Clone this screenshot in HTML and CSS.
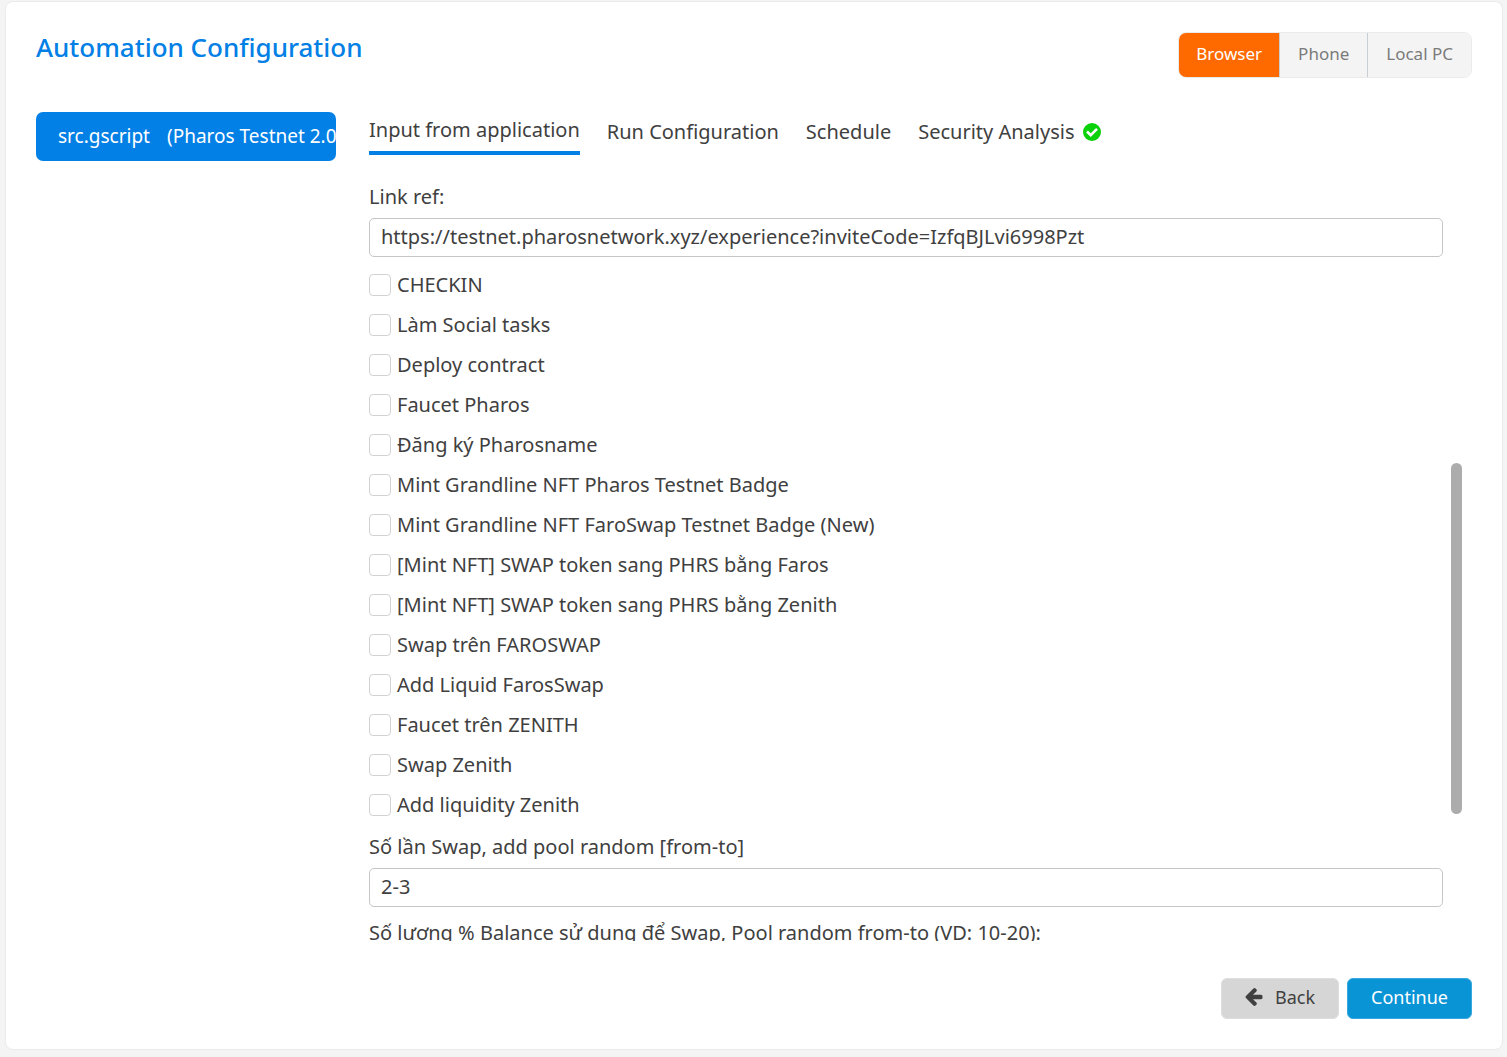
FILE: index.html
```html
<!DOCTYPE html>
<html lang="vi">
<head>
<meta charset="utf-8">
<meta name="viewport" content="width=device-width, initial-scale=1">
<title>Automation Configuration</title>
<link rel="stylesheet" href="styles.css">
</head>
<body>
<main class="card">
  <header class="card-header">
    <h1 class="title">Automation Configuration</h1>
    <div class="segmented" role="group" aria-label="Target device">
      <button type="button" class="segment segment-active">Browser</button>
      <button type="button" class="segment">Phone</button>
      <button type="button" class="segment">Local PC</button>
    </div>
  </header>

  <div class="workspace">
    <aside class="scripts">
      <button type="button" class="script"><span>src.gscript</span><span>(Pharos Testnet 2.0)</span></button>
    </aside>

    <section class="config">
      <nav class="tabs">
        <a href="#input" class="tab tab-active">Input from application</a>
        <a href="#run" class="tab">Run Configuration</a>
        <a href="#schedule" class="tab">Schedule</a>
        <a href="#security" class="tab">Security Analysis
          <svg class="verified" viewBox="0 0 18 18" aria-hidden="true"><circle cx="9" cy="9" r="9" fill="#0bd10b"/><path d="M4 8.500l3.700 3.700 6.300-6.300" fill="none" stroke="#fff" stroke-width="2.600"/></svg>
        </a>
      </nav>

      <div class="scroller">
        <form class="fields">
          <div class="field">
            <label for="link-ref">Link ref:</label>
            <input id="link-ref" class="text-input" type="text" value="https://testnet.pharosnetwork.xyz/experience?inviteCode=IzfqBJLvi6998Pzt">
          </div>
          <div class="checks">
            <label class="check"><input type="checkbox"><span>CHECKIN</span></label>
            <label class="check"><input type="checkbox"><span>Làm Social tasks</span></label>
            <label class="check"><input type="checkbox"><span>Deploy contract</span></label>
            <label class="check"><input type="checkbox"><span>Faucet Pharos</span></label>
            <label class="check"><input type="checkbox"><span>Đăng ký Pharosname</span></label>
            <label class="check"><input type="checkbox"><span>Mint Grandline NFT Pharos Testnet Badge</span></label>
            <label class="check"><input type="checkbox"><span>Mint Grandline NFT FaroSwap Testnet Badge (New)</span></label>
            <label class="check"><input type="checkbox"><span>[Mint NFT] SWAP token sang PHRS bằng Faros</span></label>
            <label class="check"><input type="checkbox"><span>[Mint NFT] SWAP token sang PHRS bằng Zenith</span></label>
            <label class="check"><input type="checkbox"><span>Swap trên FAROSWAP</span></label>
            <label class="check"><input type="checkbox"><span>Add Liquid FarosSwap</span></label>
            <label class="check"><input type="checkbox"><span>Faucet trên ZENITH</span></label>
            <label class="check"><input type="checkbox"><span>Swap Zenith</span></label>
            <label class="check"><input type="checkbox"><span>Add liquidity Zenith</span></label>
          </div>
          <div class="field">
            <label for="swap-count">Số lần Swap, add pool random [from-to]</label>
            <input id="swap-count" class="text-input" type="text" value="2-3">
          </div>
          <div class="field">
            <label for="balance">Số lượng % Balance sử dụng để Swap, Pool random from-to (VD: 10-20):</label>
            <input id="balance" class="text-input" type="text">
          </div>
        </form>
        <div class="track" aria-hidden="true"><div class="thumb"></div></div>
      </div>
    </section>
  </div>

  <footer class="actions">
    <button type="button" class="button button-back">
      <svg class="arrow" viewBox="148 180 1560 1560" aria-hidden="true"><path fill="#404040" d="M1664 896v128q0 53-32.500 90.500t-84.500 37.500h-704l293 294q38 36 38 90t-38 90l-75 76q-37 37-90 37-52 0-91-37l-651-652q-37-37-37-90 0-52 37-91l651-650q38-38 91-38 52 0 90 38l75 74q38 38 38 91t-38 91l-293 293h704q52 0 84.500 37.500t32.500 90.500z"/></svg>Back</button>
    <button type="button" class="button button-continue">Continue</button>
  </footer>
</main>
</body>
</html>
```
FILE: styles.css
```css
* {
  box-sizing: border-box;
}

body {
  margin: 0;
  height: 100vh;
  padding: 1px 4px 7px 5px;
  background: #f4f4f4;
  color: #404040;
  font: 20px/28px "Noto Sans", "Open Sans", sans-serif;
}

button,
input {
  font: inherit;
  color: inherit;
}

.card {
  display: flex;
  flex-direction: column;
  height: 100%;
  padding: 30px;
  background: #fff;
  border: 1px solid #ebebeb;
  border-radius: 8px;
}

.card-header {
  display: flex;
  justify-content: space-between;
  align-items: flex-start;
  margin-bottom: 34px;
}

.title {
  margin: 0;
  color: #0380e5;
  font-size: 26px;
  font-weight: 500;
  line-height: 30px;
}

.segmented {
  display: flex;
  overflow: hidden;
  height: 46px;
  border: 1px solid #ebebeb;
  border-radius: 8px;
}

.segment {
  padding: 0 18px 2px;
  border: 0;
  border-left: 1px solid #c9ced3;
  background: #f4f4f4;
  color: #7b7b7b;
  font-size: 17px;
}

.segment-active {
  padding: 0 17px 2px;
  border-left: 0;
  background: #ff6a00;
  color: #fff;
}

.workspace {
  display: flex;
  flex: 1;
  gap: 33px;
  min-height: 0;
}

.scripts {
  flex: 0 0 300px;
  min-width: 0;
}

.script {
  display: flex;
  gap: 17px;
  width: 100%;
  height: 49px;
  padding: 10px 0 10px 22px;
  overflow: hidden;
  border: 0;
  border-radius: 7px;
  background: #0380e5;
  color: #fff;
  font-size: 19px;
  white-space: nowrap;
}

.config {
  display: flex;
  flex: 1;
  flex-direction: column;
  min-width: 0;
}

.tabs {
  display: flex;
  gap: 27px;
  align-items: center;
  height: 43px;
}

.tab {
  display: flex;
  gap: 8px;
  align-items: center;
  padding-bottom: 4px;
  color: inherit;
  text-decoration: none;
  white-space: nowrap;
}

.tab-active {
  height: 43px;
  border-bottom: 4px solid #0380e5;
}

.verified,
.arrow {
  flex: none;
  width: 18px;
  height: 18px;
}

.scroller {
  display: flex;
  flex: 1;
  gap: 8px;
  min-height: 0;
  margin-top: 16px;
  padding-right: 10px;
  overflow: hidden;
}

.fields {
  display: flex;
  flex: 1;
  flex-direction: column;
  gap: 8px;
  padding-top: 12px;
}

.field {
  display: flex;
  flex-direction: column;
  gap: 7px;
}

.field + .field {
  margin-top: 4px;
}

.text-input {
  width: 100%;
  height: 39px;
  padding: 0 11px 2px;
  border: 1px solid #c6c6c6;
  border-radius: 5px;
  background: #fff;
}

.check {
  display: flex;
  gap: 6px;
  align-items: center;
  height: 40px;
}

.check span {
  padding-bottom: 1px;
}

.check input {
  appearance: none;
  width: 22px;
  height: 22px;
  margin: 0;
  border: 1px solid #d2d2d2;
  border-radius: 4px;
  background: #fff;
}

.check input:checked {
  background: #0380e5;
}

.track {
  display: grid;
  flex: 0 0 11px;
  grid-template-rows: 292fr 352fr 127fr;
}

.thumb {
  grid-row: 2;
  border-radius: 6px;
  background: #adacac;
}

.actions {
  display: flex;
  justify-content: flex-end;
  gap: 8px;
  padding-top: 37px;
}

.button {
  display: flex;
  gap: 12px;
  align-items: center;
  height: 41px;
  padding: 0 23px 3px;
  border: 1px solid;
  border-radius: 6px;
  font-size: 18px;
}

.button-back {
  border-color: #dedede;
  background: #d6d6d6;
}

.button-continue {
  border-color: #38a9df;
  background: #0994d5;
  color: #fff;
}
```
